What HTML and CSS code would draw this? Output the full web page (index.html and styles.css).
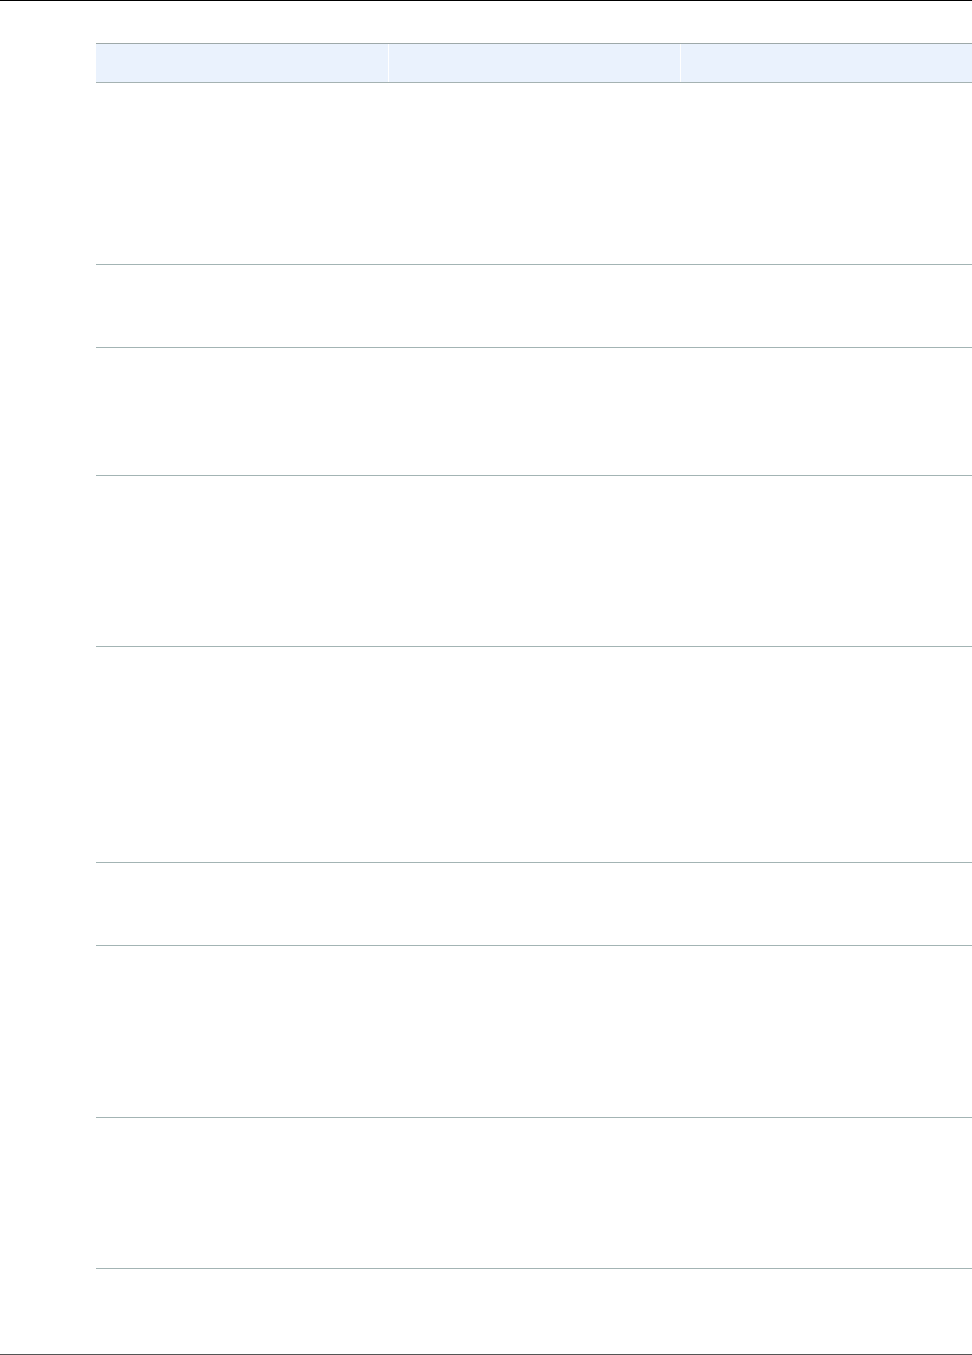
FILE: index.html
```html
<!DOCTYPE html>
<html lang="en">
<head>
<meta charset="utf-8">
<title>Table</title>
<link rel="stylesheet" href="styles.css">
</head>
<body>
<div class="top-rule"></div>
<main class="content">
  <div class="table">
    <div class="row head">
      <div class="cell"></div>
      <div class="cell"></div>
      <div class="cell"></div>
    </div>
    <div class="row r1"><div class="cell"></div><div class="cell"></div><div class="cell"></div></div>
    <div class="row r2"><div class="cell"></div><div class="cell"></div><div class="cell"></div></div>
    <div class="row r3"><div class="cell"></div><div class="cell"></div><div class="cell"></div></div>
    <div class="row r4"><div class="cell"></div><div class="cell"></div><div class="cell"></div></div>
    <div class="row r5"><div class="cell"></div><div class="cell"></div><div class="cell"></div></div>
    <div class="row r6"><div class="cell"></div><div class="cell"></div><div class="cell"></div></div>
    <div class="row r7"><div class="cell"></div><div class="cell"></div><div class="cell"></div></div>
    <div class="row r8"><div class="cell"></div><div class="cell"></div><div class="cell"></div></div>
  </div>
</main>
<footer class="bottom-rule"></footer>
</body>
</html>
```

FILE: styles.css
```css
html, body {
  margin: 0;
  padding: 0;
  background: #ffffff;
  font-family: "Liberation Sans", Arial, sans-serif;
  overflow: hidden;
}

.top-rule {
  height: 0;
  border-top: 1px solid #000000;
}

.content {
  padding: 42px 0 0 96px;
}

.table {
  width: 876px;
  border-top: 1px solid #9ea9a9;
}

.row {
  display: flex;
  border-bottom: 1px solid #a3b4b4;
}

.cell {
  width: 292px;
  flex: 0 0 292px;
}

.head {
  height: 38px;
  background: #eaf2fd;
  border-bottom-color: #a5b2b2;
}

.head .cell + .cell {
  border-left: 1px solid #ffffff;
  flex-basis: 291px;
  width: 291px;
}

.r1 { height: 181px; }
.r2 { height: 82px; }
.r3 { height: 127px; }
.r4 { height: 170px; }
.r5 { height: 215px; }
.r6 { height: 82px; }
.r7 { height: 171px; }
.r8 { height: 150px; }

.bottom-rule {
  margin-top: 85px;
  border-top: 1px solid #555555;
}
```
